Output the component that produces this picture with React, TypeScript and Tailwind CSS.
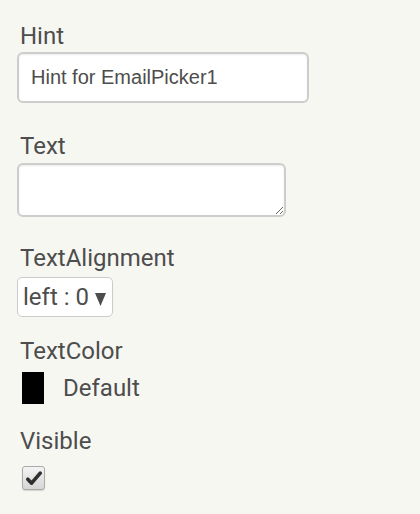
import React from "react";

const label = "text-[24px] leading-[28px] text-[#4d4d4d] [font-family:Roboto,'Liberation_Sans',sans-serif]";

function Checkbox() {
  return (
    <div className="flex h-[24px] w-[23px] items-center justify-center rounded-[3px] border border-[#a9a9a9] bg-gradient-to-b from-[#f4f4f4] to-[#d6d6d6] shadow-[0_1px_1px_rgba(0,0,0,0.15)]">
      <svg width="16" height="15" viewBox="0 0 16 15">
        <path d="M1.8 8.2 L5.6 12.2 L14.2 2.2" fill="none" stroke="#2f2f2f" strokeWidth="3.6" strokeLinejoin="round" strokeLinecap="round" />
      </svg>
    </div>
  );
}

export default function App() {
  return (
    <div className="min-h-[514px] w-[420px] bg-[#f7f7f2] pl-[17px] pt-[22px]">
      <div className={`${label} pl-[3px]`}>Hint</div>
      <input
        readOnly
        value="Hint for EmailPicker1"
        className="mt-[2px] block h-[51px] w-[292px] rounded-[6px] border-2 border-[#cdcdcd] bg-white pl-[12px] text-[20px] text-[#4d4d4d] shadow-[inset_0_1px_2px_rgba(0,0,0,0.08)] outline-none [font-family:'Liberation_Sans',Arial,sans-serif]"
      />

      <div className={`${label} mt-[29px] pl-[3px]`}>Text</div>
      <textarea
        readOnly
        className="mt-[3px] block h-[54px] w-[269px] rounded-[6px] border-2 border-[#cdcdcd] bg-white shadow-[inset_0_1px_2px_rgba(0,0,0,0.08)] outline-none"
      />

      <div className={`${label} mt-[27px] pl-[3px]`}>TextAlignment</div>
      <div className="mt-[5px] flex h-[40px] w-[96px] items-center rounded-[5px] border border-[#cccccc] bg-white pl-[5px]">
        <span className="text-[24px] leading-none text-[#4d4d4d] [font-family:Roboto,'Liberation_Sans',sans-serif]">
          left : 0
        </span>
        <svg className="ml-[6px] mt-[4px]" width="11" height="13" viewBox="0 0 11 13">
          <polygon points="0,0 11,0 5.5,13" fill="#4d4d4d" />
        </svg>
      </div>

      <div className={`${label} mt-[20px] pl-[3px]`}>TextColor</div>
      <div className="mt-[7px] flex items-center pl-[5px]">
        <div className="h-[32px] w-[22px] bg-black" />
        <span className="ml-[19px] text-[24px] leading-[28px] text-[#4d4d4d] [font-family:Roboto,'Liberation_Sans',sans-serif]">
          Default
        </span>
      </div>

      <div className={`${label} mt-[23px] pl-[3px]`}>Visible</div>
      <div className="mt-[11px] pl-[5px]">
        <Checkbox />
      </div>
    </div>
  );
}
